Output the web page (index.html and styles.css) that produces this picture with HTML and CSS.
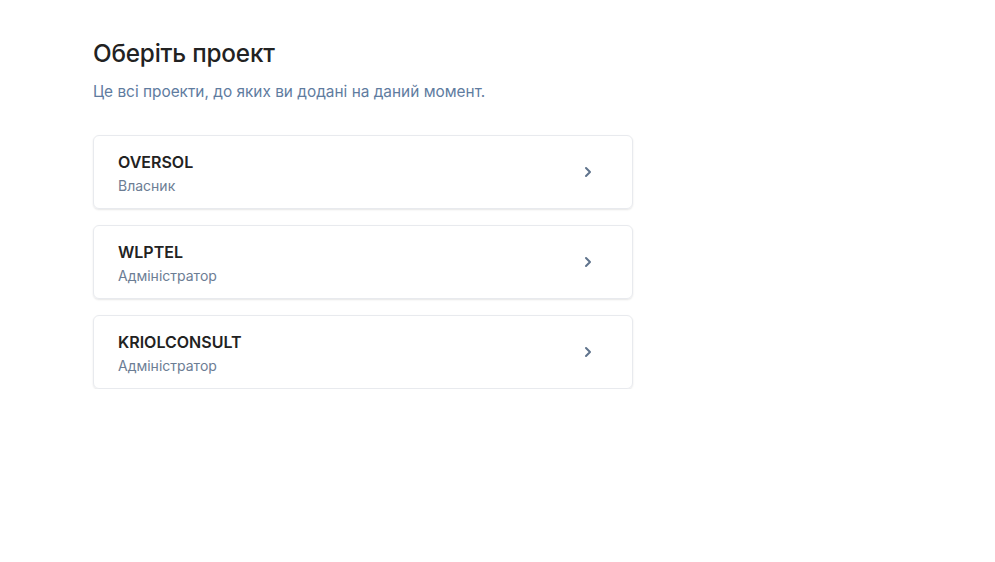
FILE: index.html
```html
<!DOCTYPE html>
<html lang="uk">
<head>
<meta charset="utf-8">
<link rel="stylesheet" href="styles.css">
</head>
<body>
<main class="page">
  <h1 class="title">Оберіть проект</h1>
  <p class="subtitle">Це всі проекти, до яких ви додані на даний момент.</p>
  <ul class="projects">
    <li class="card">
      <div class="info"><div class="name">OVERSOL</div><div class="role">Власник</div></div>
      <svg class="chev" width="16" height="16" viewBox="0 0 16 16"><path d="M6 4l4 4-4 4" fill="none" stroke="currentColor" stroke-width="2" stroke-linecap="round" stroke-linejoin="round"/></svg>
    </li>
    <li class="card">
      <div class="info"><div class="name">WLPTEL</div><div class="role">Адміністратор</div></div>
      <svg class="chev" width="16" height="16" viewBox="0 0 16 16"><path d="M6 4l4 4-4 4" fill="none" stroke="currentColor" stroke-width="2" stroke-linecap="round" stroke-linejoin="round"/></svg>
    </li>
    <li class="card">
      <div class="info"><div class="name">KRIOLCONSULT</div><div class="role">Адміністратор</div></div>
      <svg class="chev" width="16" height="16" viewBox="0 0 16 16"><path d="M6 4l4 4-4 4" fill="none" stroke="currentColor" stroke-width="2" stroke-linecap="round" stroke-linejoin="round"/></svg>
    </li>
  </ul>
</main>
</body>
</html>
```
FILE: styles.css
```css
* { box-sizing: border-box; }
html, body { margin: 0; padding: 0; background: #fff; }
body { font-family: Inter, "Noto Sans", sans-serif; color: #1f2328; }
.page { width: 540px; margin-left: 93px; padding-top: 37px; }
.title { margin: 0; font-size: 24.3px; line-height: 32px; font-weight: 500; color: #222; letter-spacing: -0.2px; }
.subtitle { margin: 12px 0 0; font-size: 15.4px; line-height: 22px; color: #5f7c9f; }
.projects { list-style: none; margin: 32px 0 0; padding: 0; display: flex; flex-direction: column; gap: 16px; }
.card { height: 74px; border: 1px solid #e8eaee; border-radius: 6px; box-shadow: 0 1px 2px rgba(0,0,0,0.1); display: flex; align-items: center; justify-content: space-between; padding: 0 36px 0 24px; }
.info { display: flex; flex-direction: column; gap: 4px; padding-top: 3px; }
.name { font-size: 16px; line-height: 20px; font-weight: 600; color: #222; }
.role { font-size: 14px; line-height: 20px; color: #6c7d94; }
.chev { color: #5f738c; }
```
